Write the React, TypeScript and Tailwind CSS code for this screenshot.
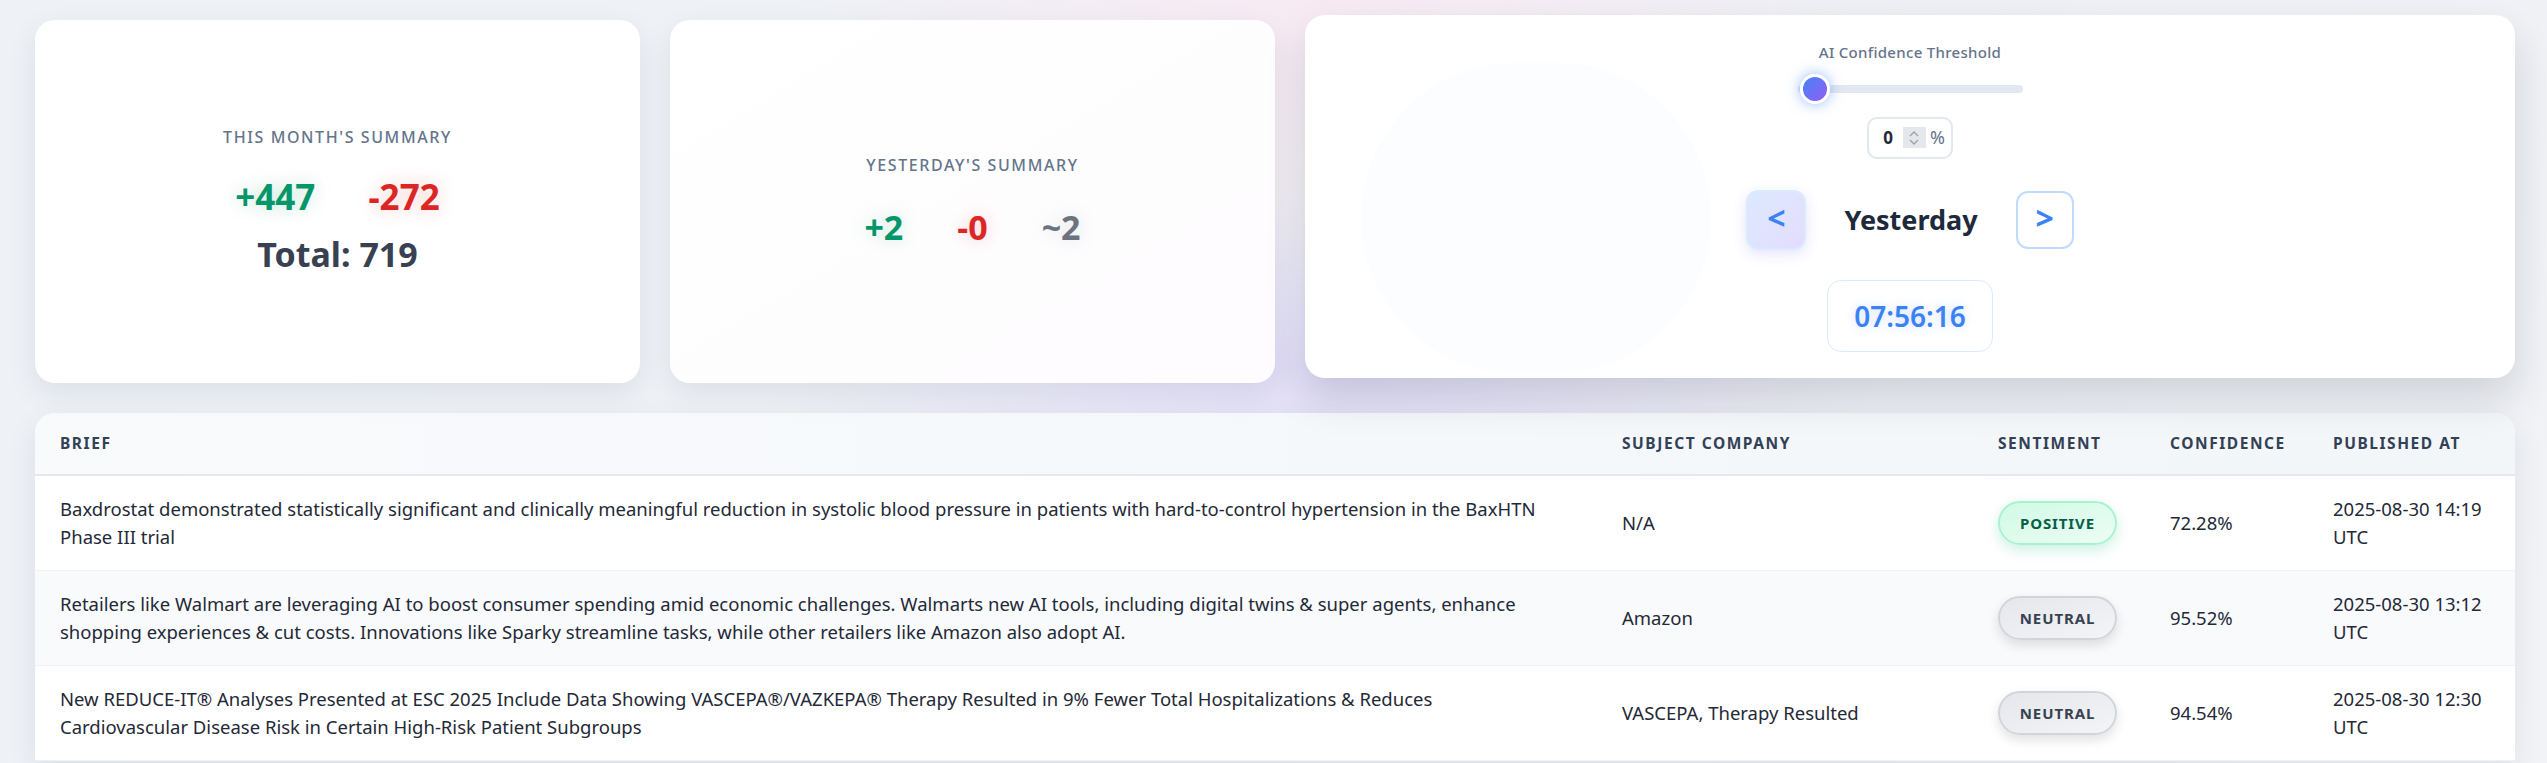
import React from "react";

type Row = {
  brief: string[];
  company: string;
  sentiment: "POSITIVE" | "NEUTRAL";
  confidence: string;
  date: string;
};

const rows: Row[] = [
  {
    brief: [
      "Baxdrostat demonstrated statistically significant and clinically meaningful reduction in systolic blood pressure in patients with hard-to-control hypertension in the BaxHTN",
      "Phase III trial",
    ],
    company: "N/A",
    sentiment: "POSITIVE",
    confidence: "72.28%",
    date: "2025-08-30 14:19",
  },
  {
    brief: [
      "Retailers like Walmart are leveraging AI to boost consumer spending amid economic challenges. Walmarts new AI tools, including digital twins & super agents, enhance",
      "shopping experiences & cut costs. Innovations like Sparky streamline tasks, while other retailers like Amazon also adopt AI.",
    ],
    company: "Amazon",
    sentiment: "NEUTRAL",
    confidence: "95.52%",
    date: "2025-08-30 13:12",
  },
  {
    brief: [
      "New REDUCE-IT® Analyses Presented at ESC 2025 Include Data Showing VASCEPA®/VAZKEPA® Therapy Resulted in 9% Fewer Total Hospitalizations & Reduces",
      "Cardiovascular Disease Risk in Certain High-Risk Patient Subgroups",
    ],
    company: "VASCEPA, Therapy Resulted",
    sentiment: "NEUTRAL",
    confidence: "94.54%",
    date: "2025-08-30 12:30",
  },
];

function Badge({ kind }: { kind: Row["sentiment"] }) {
  if (kind === "POSITIVE") {
    return (
      <span className="inline-flex h-[44px] w-[119px] items-center justify-center rounded-full border-2 border-[#a7f3d0] bg-gradient-to-br from-[#d1fae5] to-[#ecfdf5] text-[15px] font-bold tracking-[0.06em] text-[#065f46] shadow-[0_5px_14px_rgba(16,185,129,0.22)]">
        POSITIVE
      </span>
    );
  }
  return (
    <span className="inline-flex h-[44px] w-[119px] items-center justify-center rounded-full border-2 border-[#d1d5db] bg-gradient-to-br from-[#e5e7eb] to-[#f3f4f6] text-[15px] font-bold tracking-[0.06em] text-[#374151] shadow-[0_5px_12px_rgba(0,0,0,0.12)]">
      NEUTRAL
    </span>
  );
}

export default function App() {
  return (
    <div className="min-h-screen w-full overflow-hidden bg-[radial-gradient(ellipse_at_52%_48%,rgba(221,214,250,0.7),transparent_30%),radial-gradient(ellipse_at_52%_0%,rgba(250,232,242,0.8),transparent_28%),linear-gradient(135deg,#eef2f7,#eef0f5_60%,#f1f3f6)] pl-[35px] pr-[32px] pt-[20px] font-['Noto_Sans',sans-serif]">
      <div className="grid grid-cols-[1fr_1fr_2fr] gap-[30px]">
        {/* This month's summary */}
        <div className="flex h-[363px] flex-col items-center justify-center rounded-[20px] bg-white shadow-[0_10px_30px_rgba(15,23,42,0.08)]">
          <div className="text-[16px] font-medium uppercase leading-[20px] tracking-[0.1em] text-[#64748b]">
            This Month's Summary
          </div>
          <div className="mt-[28px] flex items-center gap-[53px] text-[35px] font-bold leading-[44px]">
            <span className="text-[#059669] [text-shadow:0_0_18px_rgba(5,150,105,0.25)]">+447</span>
            <span className="text-[#dc2626] [text-shadow:0_0_18px_rgba(220,38,38,0.25)]">-272</span>
          </div>
          <div className="mt-[13px] text-[34px] font-bold leading-[44px] text-[#374151]">
            Total: 719
          </div>
        </div>

        {/* Yesterday's summary */}
        <div className="flex h-[363px] flex-col items-center justify-center rounded-[20px] bg-gradient-to-br from-white to-[#fefcfe] shadow-[0_10px_30px_rgba(15,23,42,0.08)]">
          <div className="text-[16px] font-medium uppercase leading-[20px] tracking-[0.1em] text-[#64748b]">
            Yesterday's Summary
          </div>
          <div className="mt-[30px] flex items-center gap-[54px] text-[34px] font-bold leading-[44px]">
            <span className="text-[#059669] [text-shadow:0_0_18px_rgba(5,150,105,0.25)]">+2</span>
            <span className="text-[#dc2626] [text-shadow:0_0_18px_rgba(220,38,38,0.25)]">-0</span>
            <span className="text-[#6b7280] [text-shadow:0_0_18px_rgba(107,114,128,0.25)]">~2</span>
          </div>
        </div>

        {/* Controls */}
        <div className="relative flex h-[363px] -translate-y-[5px] flex-col items-center justify-center overflow-hidden rounded-[20px] bg-white shadow-[0_20px_40px_rgba(15,23,42,0.14)]">
          <div className="pointer-events-none absolute left-[56px] top-[48px] h-[310px] w-[350px] rounded-full bg-[#fafbfd] opacity-50" />
          <div className="relative flex flex-col items-center">
            <div className="text-[15px] font-medium leading-[20px] tracking-[0.02em] text-[#64748b]">
              AI Confidence Threshold
            </div>
            <div className="mt-[12px] flex h-[30px] items-center">
              <div className="relative h-[8px] w-[225px] rounded-full bg-[#e2e8f0]">
                <div className="absolute left-[2px] top-1/2 h-[30px] w-[30px] -translate-y-1/2 rounded-full border-[3px] border-white bg-gradient-to-br from-[#3b82f6] to-[#8b5cf6] shadow-[0_0_14px_rgba(59,130,246,0.55)]" />
              </div>
            </div>
            <div className="mt-[13px] flex h-[42px] w-[86px] items-center justify-center gap-[4px] rounded-[10px] border-2 border-[#e2e8f0] bg-white">
              <span className="ml-[8px] text-[17px] font-bold text-[#1e293b]">0</span>
              <span className="ml-[6px] flex h-[21px] w-[23px] flex-col items-center justify-center bg-[#e5e7eb]">
                <svg width="10" height="6" viewBox="0 0 10 6" fill="none">
                  <path d="M1 5L5 1L9 5" stroke="#9ca3af" strokeWidth="1.4" />
                </svg>
                <svg width="10" height="6" viewBox="0 0 10 6" fill="none" className="mt-[2px]">
                  <path d="M1 1L5 5L9 1" stroke="#9ca3af" strokeWidth="1.4" />
                </svg>
              </span>
              <span className="text-[18px] text-[#64748b]">%</span>
            </div>
            <div className="mt-[31px] flex items-center">
              <button className="flex h-[60px] w-[60px] items-center justify-center rounded-[12px] border-2 border-[#dbeafe] bg-gradient-to-br from-[#dbeafe] to-[#e4dcfd] pb-[3px] text-[32px] font-bold text-[#3b82f6] shadow-[0_4px_14px_rgba(99,102,241,0.18)]">
                &lt;
              </button>
              <div className="mx-[38px] text-[27px] font-bold leading-[36px] text-[#1e293b]">
                Yesterday
              </div>
              <button className="flex h-[58px] w-[58px] items-center justify-center rounded-[12px] border-2 border-[#bfdbfe] bg-white pb-[3px] text-[32px] font-bold text-[#3b82f6]">
                &gt;
              </button>
            </div>
            <div className="mt-[30px] flex h-[72px] w-[166px] items-center justify-center rounded-[14px] border border-[#dbeafe] bg-white">
              <span className="text-[28px] font-semibold text-[#3b82f6] [text-shadow:0_0_10px_rgba(59,130,246,0.25)]">
                07:56:16
              </span>
            </div>
          </div>
        </div>
      </div>

      {/* Table */}
      <div className="mt-[30px] overflow-hidden rounded-t-[20px] bg-white shadow-[0_10px_30px_rgba(15,23,42,0.08)]">
        <table className="w-full table-fixed border-collapse">
          <colgroup>
            <col className="w-[1562px]" />
            <col className="w-[376px]" />
            <col className="w-[172px]" />
            <col className="w-[163px]" />
            <col />
          </colgroup>
          <thead>
            <tr className="border-b-2 border-[#e5e9ef] bg-gradient-to-r from-[#f8fafc] to-[#f3f6f9]">
              {["Brief", "Subject Company", "Sentiment", "Confidence", "Published At"].map((h) => (
                <th
                  key={h}
                  className="px-[25px] py-[20px] text-left text-[15.5px] font-bold uppercase leading-[21px] tracking-[0.1em] text-[#334155]"
                >
                  {h}
                </th>
              ))}
            </tr>
          </thead>
          <tbody>
            {rows.map((r, i) => (
              <tr
                key={i}
                className={`border-b border-[#eef1f5] ${i % 2 === 1 ? "bg-[#f9fafc]" : "bg-white"}`}
              >
                <td className="px-[25px] py-[19px] align-middle text-[18.5px] leading-[28px] text-[#1f2937]">
                  {r.brief.map((line, j) => (
                    <span key={j} className="block">
                      {line}
                    </span>
                  ))}
                </td>
                <td className="px-[25px] py-[19px] align-middle text-[18.5px] leading-[28px] text-[#1f2937]">
                  {r.company}
                </td>
                <td className="px-[25px] py-[19px] align-middle">
                  <Badge kind={r.sentiment} />
                </td>
                <td className="px-[25px] py-[19px] align-middle text-[18.5px] leading-[28px] text-[#1f2937]">
                  {r.confidence}
                </td>
                <td className="px-[25px] py-[19px] align-middle text-[18.5px] leading-[28px] text-[#1f2937]">
                  <span className="whitespace-nowrap">{r.date}</span> UTC
                </td>
              </tr>
            ))}
          </tbody>
        </table>
      </div>
    </div>
  );
}
